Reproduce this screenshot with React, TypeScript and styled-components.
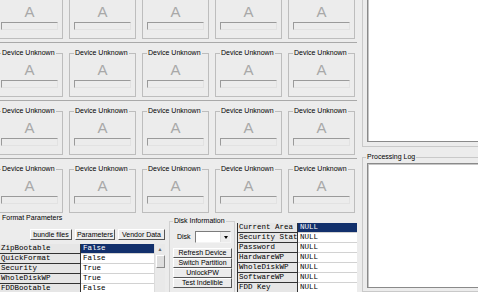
import styled, { createGlobalStyle } from "styled-components";

const GlobalStyle = createGlobalStyle`
  html, body {
    margin: 0;
    padding: 0;
    background: #ffffff;
  }
  body {
    font-family: "Liberation Sans", Arial, sans-serif;
  }
`;

const NAVY = "#12306c";

const Window = styled.div`
  display: flex;
  width: 478px;
  height: 292px;
  overflow: hidden;
  background: #ececec;
  color: #000;
  font: 7px/8px "Liberation Sans", Arial, sans-serif;
`;

const LeftPane = styled.div`
  display: flex;
  flex-direction: column;
  width: 360px;
  flex-shrink: 0;
`;

const DeviceArea = styled.div`
  height: 213px;
  overflow: hidden;
`;

const DeviceScroll = styled.div`
  width: 361px;
  margin: -15px 0 0 -4px;
`;

const DeviceRow = styled.div`
  display: flex;
  gap: 6px;
  height: 51px;
  padding-top: 6px;
  border-bottom: 1px solid #a9a9a9;
`;

const Card = styled.fieldset`
  box-sizing: border-box;
  width: 67px;
  height: 48px;
  min-width: 0;
  margin: 0;
  padding: 0 4px;
  border: 1px solid #bdbdbd;
`;

const GroupLegend = styled.legend`
  padding: 0 1px;
  font: 7px/8px "Liberation Sans", Arial, sans-serif;
  white-space: nowrap;
`;

const Glyph = styled.div`
  margin-top: 5px;
  text-align: center;
  font: 15px/15px "Liberation Sans", Arial, sans-serif;
  color: #a8a8a8;
`;

const SlotBox = styled.div`
  box-sizing: border-box;
  height: 8px;
  margin-top: 3px;
  border-style: solid;
  border-width: 1px;
  border-color: #9a9a9a #e2e2e2 #e2e2e2 #9a9a9a;
`;

const BottomPanel = styled.div`
  display: flex;
  height: 79px;
`;

const FormatGroup = styled.div`
  display: flex;
  flex-direction: column;
  width: 166px;
  flex-shrink: 0;
  padding-top: 1px;
`;

const Title = styled.div`
  padding-left: 2px;
  white-space: nowrap;
`;

const ButtonBar = styled.div`
  display: flex;
  justify-content: flex-end;
  gap: 3px;
  margin-top: 7px;
  padding-right: 1px;
`;

const WinButton = styled.button<{ $w: number; $h: number }>`
  box-sizing: border-box;
  width: ${(p) => p.$w}px;
  height: ${(p) => p.$h}px;
  margin: 0;
  padding: 0;
  border-style: solid;
  border-width: 1px;
  border-color: #ffffff #555555 #555555 #ffffff;
  background: #ececec;
  color: #000;
  font: 7px/8px "Liberation Sans", Arial, sans-serif;
  text-align: center;
  white-space: nowrap;
`;

const DataGrid = styled.div<{ $cols: string }>`
  display: grid;
  grid-template-columns: ${(p) => p.$cols};
  grid-auto-rows: 10px;
`;

const NameCell = styled.div`
  box-sizing: border-box;
  overflow: hidden;
  padding-left: 1px;
  border-right: 1px solid #333;
  border-bottom: 1px solid #333;
  background: #e6e6e6;
  font: 7.5px/9px "Liberation Mono", "Courier New", monospace;
  white-space: nowrap;
  text-overflow: clip;
`;

const ValueCell = styled.div<{ $selected?: boolean }>`
  box-sizing: border-box;
  overflow: hidden;
  padding-left: 2px;
  border-bottom: 1px solid #d2d2d2;
  background: ${(p) => (p.$selected ? NAVY : "#ffffff")};
  color: ${(p) => (p.$selected ? "#ffffff" : "#000")};
  font: 7.5px/9px "Liberation Mono", "Courier New", monospace;
  white-space: nowrap;
`;

const ScrollBar = styled.div`
  grid-column: 3;
  grid-row: 1 / span 5;
  display: flex;
  flex-direction: column;
  background: #e9e9e9;
  border-left: 1px solid #dcdcdc;
`;

const ScrollArrow = styled.div`
  display: flex;
  align-items: center;
  justify-content: center;
  height: 9px;
  font-size: 5px;
  color: #666;
`;

const ScrollThumb = styled.div`
  box-sizing: border-box;
  height: 13px;
  margin: 2px 0 0 1px;
  width: 9px;
  border-style: solid;
  border-width: 1px;
  border-color: #ffffff #8c8c8c #8c8c8c #ffffff;
  background: #dedede;
`;

const PropGrid = styled(DataGrid)`
  margin-top: 4px;
`;

const DiskGroup = styled.fieldset`
  box-sizing: border-box;
  width: 66px;
  height: 76px;
  min-width: 0;
  margin: 4px 0 0 3px;
  padding: 0 3px;
  border: 1px solid #d0d0d0;
  flex-shrink: 0;
`;

const DiskRow = styled.div`
  display: flex;
  align-items: center;
  gap: 4px;
  margin-top: 6px;
  padding-left: 4px;
`;

const Combo = styled.div`
  display: flex;
  justify-content: flex-end;
  box-sizing: border-box;
  width: 37px;
  height: 12px;
  border-style: solid;
  border-width: 1px;
  border-color: #7c7c7c #f4f4f4 #f4f4f4 #7c7c7c;
  background: #ffffff;
`;

const ComboButton = styled.div`
  display: flex;
  align-items: center;
  justify-content: center;
  width: 9px;
  background: #ececec;
  border-left: 1px solid #dcdcdc;
`;

const Caret = styled.span`
  width: 0;
  height: 0;
  border-left: 2.5px solid transparent;
  border-right: 2.5px solid transparent;
  border-top: 3px solid #000;
`;

const DiskButtons = styled.div`
  display: flex;
  flex-direction: column;
  margin-top: 5px;
`;

const StatusGrid = styled(DataGrid)`
  width: 120px;
  margin: 10px 0 0 2px;
  align-self: flex-start;
  border-left: 1px solid #333;
`;

const RightPane = styled.div`
  display: flex;
  flex-direction: column;
  flex: 1;
  margin-left: 2px;
  overflow: hidden;
`;

const TopGroup = styled.div`
  box-sizing: border-box;
  width: 140px;
  height: 169px;
  margin-top: -20px;
  padding: 4px 0 4px 4px;
  border: 1px solid #c9c9c9;
`;

const TextPane = styled.div<{ $h?: number }>`
  box-sizing: border-box;
  height: ${(p) => (p.$h ? `${p.$h}px` : "100%")};
  border: 1px solid #8a8a8a;
  box-shadow: inset 1px 1px 0 #c6c6c6;
  background: #ffffff;
`;

const LogGroup = styled.fieldset`
  box-sizing: border-box;
  width: 140px;
  min-width: 0;
  margin: 6px 0 0 0;
  padding: 2px 0 3px 4px;
  border: 1px solid #c9c9c9;
`;

const LogLegend = styled(GroupLegend)`
  margin-left: -1px;
`;

const deviceRows = [0, 1, 2, 3];
const deviceCols = [0, 1, 2, 3, 4];

const formatParams: [string, string][] = [
  ["ZipBootable", "False"],
  ["QuickFormat", "False"],
  ["Security", "True"],
  ["WholeDiskWP", "True"],
  ["FDDBootable", "False"],
];

const statusRows = [
  "Current Area",
  "Security Status",
  "Password",
  "HardwareWP",
  "WholeDiskWP",
  "SoftwareWP",
  "FDD Key",
];

const diskActions = ["Refresh Device", "Switch Partition", "UnlockPW", "Test Indelible"];

export default function App() {
  return (
    <>
      <GlobalStyle />
      <Window>
        <LeftPane>
          <DeviceArea>
            <DeviceScroll>
              {deviceRows.map((r) => (
                <DeviceRow key={r}>
                  {deviceCols.map((c) => (
                    <Card key={c}>
                      <GroupLegend>Device Unknown</GroupLegend>
                      <Glyph>A</Glyph>
                      <SlotBox />
                    </Card>
                  ))}
                </DeviceRow>
              ))}
            </DeviceScroll>
          </DeviceArea>

          <BottomPanel>
            <FormatGroup>
              <Title>Format Parameters</Title>
              <ButtonBar>
                <WinButton $w={42} $h={11}>bundle files</WinButton>
                <WinButton $w={40} $h={11}>Parameters</WinButton>
                <WinButton $w={47} $h={11}>Vendor Data</WinButton>
              </ButtonBar>
              <PropGrid $cols="81px 73px 11px">
                {formatParams.flatMap(([name, value], i) => [
                  <NameCell key={`n${i}`}>{name}</NameCell>,
                  <ValueCell key={`v${i}`} $selected={i === 0}>
                    {value}
                  </ValueCell>,
                ])}
                <ScrollBar>
                  <ScrollArrow>▲</ScrollArrow>
                  <ScrollThumb />
                </ScrollBar>
              </PropGrid>
            </FormatGroup>

            <DiskGroup>
              <GroupLegend>Disk Information</GroupLegend>
              <DiskRow>
                <span>Disk</span>
                <Combo>
                  <ComboButton>
                    <Caret />
                  </ComboButton>
                </Combo>
              </DiskRow>
              <DiskButtons>
                {diskActions.map((a) => (
                  <WinButton key={a} $w={59} $h={10}>
                    {a}
                  </WinButton>
                ))}
              </DiskButtons>
            </DiskGroup>

            <StatusGrid $cols="60px 59px">
              {statusRows.flatMap((name, i) => [
                <NameCell key={`s${i}`}>{name}</NameCell>,
                <ValueCell key={`t${i}`} $selected={i === 0}>
                  NULL
                </ValueCell>,
              ])}
            </StatusGrid>
          </BottomPanel>
        </LeftPane>

        <RightPane>
          <TopGroup>
            <TextPane />
          </TopGroup>
          <LogGroup>
            <LogLegend>Processing Log</LogLegend>
            <TextPane $h={125} />
          </LogGroup>
        </RightPane>
      </Window>
    </>
  );
}
